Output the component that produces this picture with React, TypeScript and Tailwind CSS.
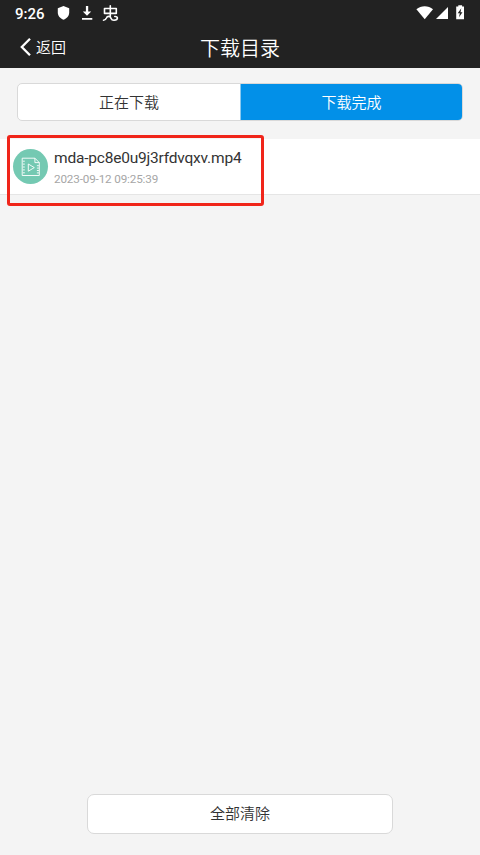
function StatusBar() {
  return (
    <div className="flex h-[26px] items-center text-white">
      <span className="ml-[15px] w-[42px] pt-px text-[15px] leading-[26px] font-medium">9:26</span>
      <svg className="h-[26px] w-[65px]" viewBox="57 0 65 26" fill="none">
        <path d="M63.5 6 69.2 8.3V12.6C69.2 16 66.8 18.7 63.5 19.8 60.2 18.7 57.8 16 57.8 12.6V8.3Z" fill="#fff" />
        <path d="M85.9 6h2.3v5.5h3L87 15.8l-4.2-4.3h3.1ZM82 18h10.3v1.7H82Z" fill="#fff" />
        <path
          d="M104.5 8.5h11.8v4.9h-11.8ZM110.3 5.8v10.6M103.5 20.2c2 0 2.4-.9 2.9-2.2.4-1.2 1.2-1.6 2.4-1.6 1.6 0 1.9 1 2.3 2.1.4 1.2 1.2 1.8 2.9 1.8 2.3 0 3.4-.9 3.4-2.2 0-1.1-1-1.8-2.6-1.6"
          stroke="#fff"
          strokeWidth="1.6"
          strokeLinejoin="round"
          strokeLinecap="round"
        />
      </svg>
      <svg className="ml-auto h-[26px] w-[64px]" viewBox="416 0 64 26">
        <path d="M416.4 9.3C421 5.1 428.4 5.1 433 9.3L424.7 19.2Z" fill="#fff" />
        <path d="M448 7v12h-12Z" fill="#fff" />
        <path d="M458.3 5.2h3.8v1.4h1.9v12.6h-7.8V6.6h2.1Z" fill="#fff" />
        <path d="M461.3 8.3 457.7 13.2h2.1l-.8 4.1 3.5-5h-2Z" fill="#222" />
      </svg>
    </div>
  );
}

function VideoIcon() {
  return (
    <div className="flex size-[35px] shrink-0 items-center justify-center rounded-full bg-[#74c9b2]">
      <svg className="size-[20px]" viewBox="0 0 20 20" fill="none" stroke="#fff" strokeWidth="0.9" strokeLinejoin="round">
        <path d="M1.2 1.2h12.7l4.4 4.4v12.9H1.2ZM13.9 1.2v4.4h4.4" />
        <path d="M1.8 4.2h2M1.8 7.1h2M1.8 10h2M1.8 12.9h2M1.8 15.8h2M15.9 8.7h2M15.9 11.1h2M15.9 13.5h2M15.9 15.9h2" />
        <path d="M7.3 7v7.2l6-3.6Z" />
      </svg>
    </div>
  );
}

export default function App() {
  return (
    <div className="flex h-[855px] w-[480px] flex-col overflow-hidden bg-[#f4f4f4] font-[Roboto,'Noto_Sans_CJK_SC',sans-serif] text-[#333]">
      <header className="h-[68px] shrink-0 bg-[#222]">
        <StatusBar />
        <div className="grid h-[42px] grid-cols-3 items-center text-white">
          <button className="flex items-center pl-[20px] text-[15px] leading-[22px]">
            <svg className="mr-[5px] h-[20px] w-[11px]" viewBox="0 0 11 20" fill="none" stroke="#fff" strokeWidth="2.3">
              <path d="M10 1.7 1.8 10l8.2 8.3" />
            </svg>
            <span className="pt-[2px] font-[350]">返回</span>
          </button>
          <h1 className="pt-[3px] text-center text-[20px] leading-[30px] font-[350]">下载目录</h1>
        </div>
      </header>

      <div className="mx-[17px] mt-[15px] flex h-[38px] shrink-0 overflow-hidden rounded-[5px] border border-[#d9d9d9] bg-white text-[15px] font-[350]">
        <button className="w-[222px] pt-[2px]">正在下载</button>
        <button className="flex-1 border-l border-[#8bc9ef] bg-[#0290e8] pt-[2px] text-white">下载完成</button>
      </div>

      <main className="relative mt-[18px] flex h-[56px] shrink-0 items-center border-b border-[#e5e5e5] bg-white pl-[13px]">
        <VideoIcon />
        <div className="ml-[6px] pt-[3px]">
          <div className="text-[15.5px] leading-[22px] tracking-[-0.2px]">mda-pc8e0u9j3rfdvqxv.mp4</div>
          <div className="text-[11.7px] leading-[20px] tracking-[-0.15px] text-[#a6a6a6]">2023-09-12 09:25:39</div>
        </div>
        <div className="absolute top-[-4px] left-[7px] h-[71px] w-[257px] rounded-[3px] border-3 border-[#f0251a]" />
      </main>

      <button className="mx-auto mt-auto mb-[21px] h-[40px] w-[306px] shrink-0 rounded-[7px] border border-[#d9d9d9] bg-white pt-px text-[15px] font-[350]">
        全部清除
      </button>
    </div>
  );
}
